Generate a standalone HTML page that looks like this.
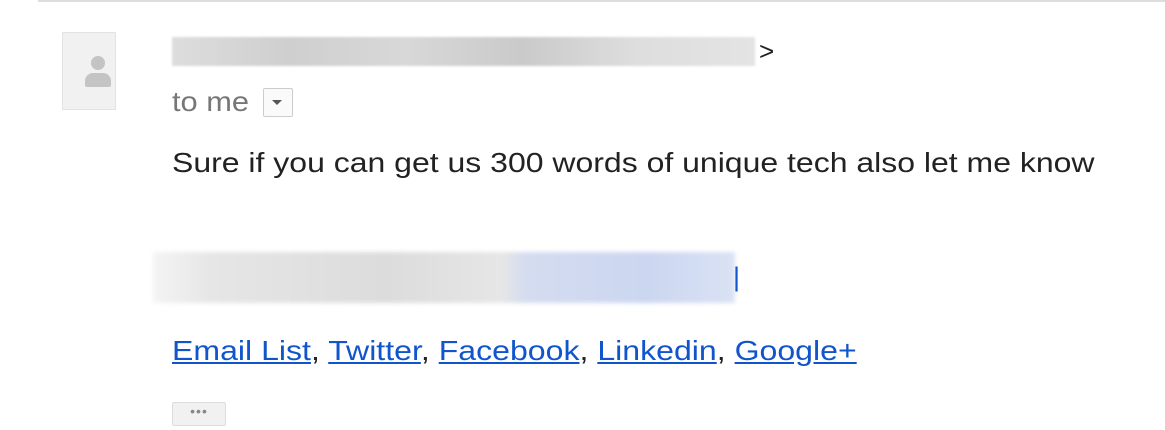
<!DOCTYPE html>
<html><head><style>
body{margin:0;width:1165px;height:430px;background:#fff;position:relative;overflow:hidden;font-family:"Liberation Sans",Arial,sans-serif;color:#222}
.abs{position:absolute}
.sx{transform-origin:0 0;white-space:nowrap}
a{color:#1155cc;text-decoration:underline}
</style></head><body>
<div class="abs" style="left:38px;top:0;width:1127px;height:2px;background:#ddd"></div>
<div class="abs" style="left:62px;top:32px;width:52px;height:76px;background:#f1f1f1;border:1px solid #e3e3e3"></div>
<div class="abs" style="left:91px;top:56px;width:14px;height:14px;border-radius:50%;background:#c4c4c4"></div>
<div class="abs" style="left:85px;top:73px;width:26px;height:14px;border-radius:8px 8px 2px 2px;background:#c4c4c4"></div>
<div class="abs" style="left:172px;top:37px;width:583px;height:29px;background:linear-gradient(90deg,#ddd,#cfcfcf 20%,#d8d8d8 40%,#cacaca 60%,#dedede 80%,#e4e4e4);filter:blur(1px)"></div>
<div class="abs" style="left:759px;top:36px;font-size:26px;color:#222">&gt;</div>
<div class="abs sx" style="left:172px;top:86px;font-size:28px;color:#777;transform:scaleX(1.1)">to me</div>
<div class="abs" style="left:263px;top:88px;width:28px;height:27px;border:1px solid #ccc;border-radius:2px;background:#fafafa"></div>
<div class="abs" style="left:272px;top:100px;width:0;height:0;border-left:5px solid transparent;border-right:5px solid transparent;border-top:5px solid #555"></div>
<div class="abs sx" style="left:172px;top:147px;font-size:28px;color:#222;transform:scaleX(1.142)">Sure if you can get us 300 words of unique tech also let me know</div>
<div class="abs" style="left:153px;top:252px;width:582px;height:51px;background:linear-gradient(90deg,#f4f4f4,#e6e6e6 10%,#dcdcdc 40%,#e6e6e6 60%,#d4dcf0 64%,#cbd6f0 85%,#dae2f4);filter:blur(2px)"></div>
<div class="abs" style="left:733px;top:262px;font-size:27px;color:#1155cc;text-decoration:underline">|</div>
<div class="abs sx" style="left:172px;top:335px;font-size:28px;color:#222;transform:scaleX(1.145)"><a>Email List</a>, <a>Twitter</a>, <a>Facebook</a>, <a>Linkedin</a>, <a>Google+</a></div>
<div class="abs" style="left:172px;top:402px;width:52px;height:22px;background:#f1f1f1;border:1px solid #ddd;border-radius:2px;text-align:center;font-size:14px;line-height:16px;color:#888;letter-spacing:1px">•••</div>
</body></html>
